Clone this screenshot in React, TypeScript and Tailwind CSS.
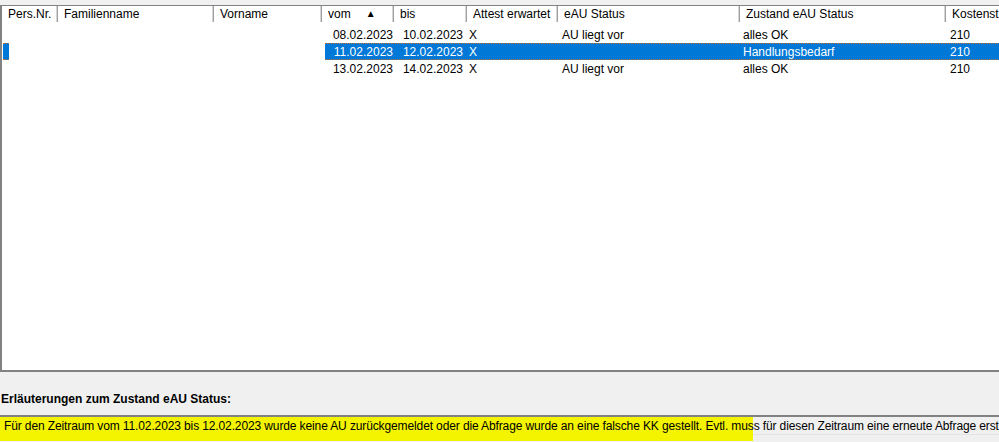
import React from 'react'

const cols = [
  { label: 'Pers.Nr.', w: 56 },
  { label: 'Familienname', w: 156 },
  { label: 'Vorname', w: 108 },
  { label: 'vom', w: 72, sort: true },
  { label: 'bis', w: 73 },
  { label: 'Attest erwartet', w: 91 },
  { label: 'eAU Status', w: 182 },
  { label: 'Zustand eAU Status', w: 206 },
  { label: 'Kostenstelle', w: 120 },
]

const rows = [
  { vom: '08.02.2023', bis: '10.02.2023', attest: 'X', eau: 'AU liegt vor', zustand: 'alles OK', kst: '210' },
  { vom: '11.02.2023', bis: '12.02.2023', attest: 'X', eau: '', zustand: 'Handlungsbedarf', kst: '210', selected: true },
  { vom: '13.02.2023', bis: '14.02.2023', attest: 'X', eau: 'AU liegt vor', zustand: 'alles OK', kst: '210' },
]

function HeaderCell({ label, w, sort }: { label: string; w: number; sort?: boolean }) {
  return (
    <div
      className="relative flex h-full shrink-0 items-center border-r-2 border-r-[#d5d5d5] pl-[6px] pr-1 whitespace-nowrap"
      style={{ width: w }}
    >
      <span className="absolute right-[-2px] top-0 h-full w-px bg-[#a0a0a0]" />
      <span>{label}</span>
      {sort && <span className="ml-[15px] text-[10px] leading-none">▲</span>}
    </div>
  )
}

export default function App() {
  return (
    <div
      className="h-[442px] w-[999px] overflow-hidden bg-[#f0f0f0] pt-[5px] text-[12px] text-black"
      style={{ fontFamily: '"Liberation Sans", Arial, sans-serif' }}
    >
      {/* list view */}
      <div className="h-[367px] w-[1200px] border-t border-b-2 border-l-2 border-[#828282] bg-white">
        <div className="flex h-[16px]">
          {cols.map((c, i) => (
            <HeaderCell key={i} label={c.label} w={c.w} sort={c.sort} />
          ))}
        </div>

        <div className="pt-[4px]">
          {rows.map((r, i) => (
            <div key={i} className="flex h-[17px] items-center">
              <div className="w-[56px] shrink-0 h-full">
                {r.selected && (
                  <div className="ml-px h-full w-[6px] border-y border-dotted border-[#c07030] bg-[#0078d7]" />
                )}
              </div>
              <div className="w-[156px] shrink-0" />
              <div className="w-[111px] shrink-0" />
              <div
                className={
                  r.selected
                    ? 'flex h-full flex-1 items-center border-y border-dotted border-[#c07030] bg-[#0078d7] text-white'
                    : 'flex h-full flex-1 items-center'
                }
              >
                <div className="w-[69px] shrink-0 pr-[1px] text-right">{r.vom}</div>
                <div className="w-[73px] shrink-0 pr-[4px] text-right">{r.bis}</div>
                <div className="w-[91px] shrink-0 pl-[2px]">{r.attest}</div>
                <div className="w-[182px] shrink-0 pl-[4px]">{r.eau}</div>
                <div className="w-[206px] shrink-0 pl-[3px]">{r.zustand}</div>
                <div className="w-[120px] shrink-0 pl-[4px]">{r.kst}</div>
              </div>
            </div>
          ))}
        </div>
      </div>

      {/* explanation */}
      <div className="mt-[20px] pl-px font-bold leading-[14px]">Erläuterungen zum Zustand eAU Status:</div>
      <div className="relative mt-[9px] h-[20px] w-[1000px] border-t-2 border-l-2 border-b border-t-[#828282] border-l-[#828282] border-b-[#e3e3e3]">
        <div className="absolute left-[-2px] top-0 h-[24px] w-[753px] bg-[#f4f400]" />
        <div className="relative whitespace-nowrap pl-[2px] leading-[18px] tracking-[-0.12px]">
          Für den Zeitraum vom 11.02.2023 bis 12.02.2023 wurde keine AU zurückgemeldet oder die Abfrage wurde an eine falsche KK gestellt. Evtl. muss für diesen Zeitraum eine erneute Abfrage erstellt werden.
        </div>
      </div>
    </div>
  )
}
